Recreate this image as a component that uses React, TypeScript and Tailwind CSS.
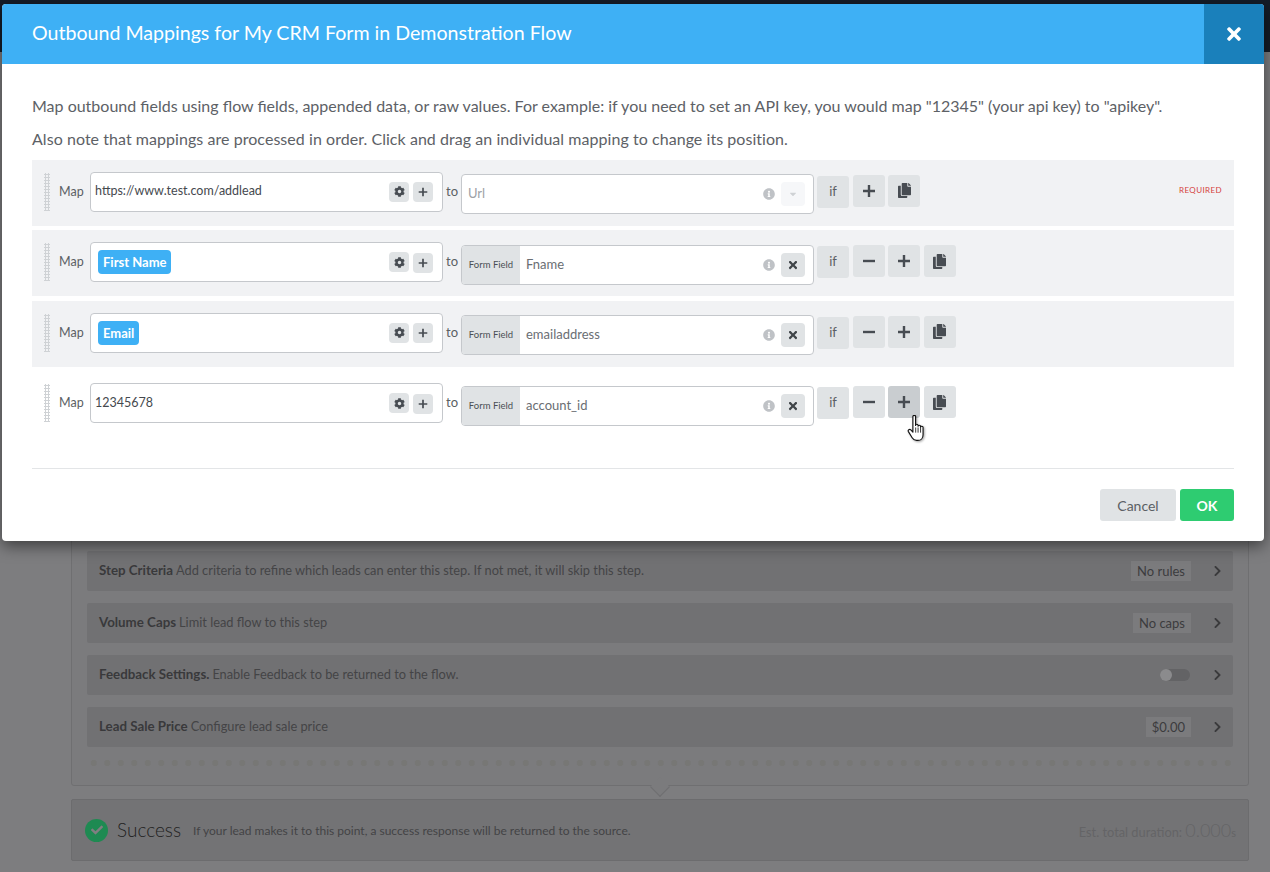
import { FaCog, FaCopy, FaInfoCircle, FaTimes, FaCheck, FaChevronRight, FaCaretDown } from 'react-icons/fa'

const font = { fontFamily: '"Lato", "Open Sans", sans-serif' }

function PlusIcon({ className = 'w-3.5 h-3.5' }: { className?: string }) {
  return (
    <svg viewBox="0 0 14 14" className={className}>
      <path d="M7 1v12M1 7h12" stroke="currentColor" strokeWidth="2.4" fill="none" />
    </svg>
  )
}

function MinusIcon() {
  return (
    <svg viewBox="0 0 14 14" className="w-3.5 h-3.5">
      <path d="M1 7h12" stroke="currentColor" strokeWidth="2.4" fill="none" />
    </svg>
  )
}

function HandCursor() {
  return (
    <svg
      viewBox="1 1 16 26"
      className="absolute left-[907px] top-[415px] w-[18px] h-[27px] drop-shadow-[1px_1px_1px_rgba(0,0,0,0.35)]"
    >
      <path
        d="M6 2.5c0-1.6 2.6-1.6 2.6 0v8.5c0-1.4 2.4-1.4 2.4 0v.8c0-1.3 2.4-1.3 2.4 0v.9c0-1.2 2.4-1.2 2.4.2v7c0 3.400-2.200 5.600-5 5.600H9.500c-2 0-3.200-1-4.200-2.600L1.700 17c-.9-1.600 1.100-2.900 2.300-1.600L6 17.500z"
        fill="#fff"
        stroke="#111"
        strokeWidth="1.1"
        strokeLinejoin="round"
      />
      <path d="M8.700 13v5M11 13v5M13.400 13v5" stroke="#111" strokeWidth=".8" fill="none" />
    </svg>
  )
}

function DragHandle() {
  return (
    <div className="w-[6px] h-[38px] mt-[1px] shrink-0 bg-[radial-gradient(circle,#cfd2d5_1px,transparent_1.1px)] bg-[length:3px_3px]" />
  )
}

function IconButton({ children, active }: { children: React.ReactNode; active?: boolean }) {
  return (
    <button
      className={`w-8 h-8 rounded-[3px] flex items-center justify-center text-[#474c52] ${active ? 'bg-[#c9cdd0]' : 'bg-[#e0e3e5]'}`}
    >
      {children}
    </button>
  )
}

type Mapping = {
  source: string
  pill?: boolean
  target: string
  required?: boolean
  hasRemove?: boolean
  bg?: boolean
  active?: boolean
}

const mappings: Mapping[] = [
  { source: 'https://www.test.com/addlead', target: 'Url', required: true, bg: true },
  { source: 'First Name', pill: true, target: 'Fname', hasRemove: true, bg: true },
  { source: 'Email', pill: true, target: 'emailaddress', hasRemove: true, bg: true },
  { source: '12345678', target: 'account_id', hasRemove: true, active: true },
]

function MappingRow({ m }: { m: Mapping }) {
  return (
    <div className={`h-[66px] mb-[4.5px] pl-3 pr-3 pt-3 flex items-start ${m.bg ? 'bg-[#f1f2f4]' : ''}`}>
      <DragHandle />
      <span className="ml-[9px] w-[31px] shrink-0 leading-[40px] text-[12.5px] text-[#5b5f64]">Map</span>
      {/* source */}
      <div className="w-[353px] h-10 shrink-0 bg-white border border-[#c5c8cc] rounded-[4px] flex items-center pl-1 pr-[9px]">
        {m.pill ? (
          <span className="ml-[3px] h-6 px-[5px] rounded-[4px] bg-[#3eb0f5] text-white text-[13px] font-bold leading-6">
            {m.source}
          </span>
        ) : (
          <span className="text-[12.5px] text-[#45494e]">{m.source}</span>
        )}
        <span className="ml-auto w-5 h-5 rounded-[4px] bg-[#e0e3e5] flex items-center justify-center text-[#474c52]">
          <FaCog className="w-[11px] h-[11px]" />
        </span>
        <span className="ml-1 w-5 h-5 mt-[1px] rounded-[4px] bg-[#e0e3e5] flex items-center justify-center text-[#474c52]">
          <PlusIcon className="w-[10px] h-[10px]" />
        </span>
      </div>
      <span className="w-[18px] ml-0 shrink-0 text-center leading-[38px] text-[13px] text-[#5b5f64]">to</span>
      {/* target */}
      <div className="w-[353px] h-10 mt-[2.5px] shrink-0 bg-white border border-[#c5c8cc] rounded-[4px] flex items-center overflow-hidden pr-2">
        {m.hasRemove ? (
          <>
            <span className="w-[58px] h-full bg-[#e0e3e5] text-[9.5px] text-[#4b4f54] flex items-center justify-center shrink-0">
              Form Field
            </span>
            <span className="ml-[6px] text-[13px] text-[#6a6e73]">{m.target}</span>
          </>
        ) : (
          <span className="ml-[6px] text-[13px] text-[#9da1a6]">{m.target}</span>
        )}
        <FaInfoCircle className="ml-auto w-3 h-3 text-[#bfc2c6]" />
        {m.hasRemove ? (
          <span className="ml-[6px] w-6 h-6 rounded-[4px] bg-[#e0e3e5] flex items-center justify-center text-[#3f4448]">
            <FaTimes className="w-3 h-3" />
          </span>
        ) : (
          <span className="ml-[6px] w-6 h-6 rounded-[4px] bg-[#f6f7f9] flex items-center justify-center text-[#cfd2d5]">
            <FaCaretDown className="w-[10px] h-[10px]" />
          </span>
        )}
      </div>
      {/* actions */}
      <div className="ml-[3px] mt-[3px] flex gap-[3.5px]">
        <div className="mt-[1px]">
          <IconButton>
            <span className="text-[13px] text-[#5b5f64]">if</span>
          </IconButton>
        </div>
        {m.hasRemove && (
          <IconButton>
            <MinusIcon />
          </IconButton>
        )}
        <IconButton active={m.active}>
          <PlusIcon />
        </IconButton>
        <IconButton>
          <FaCopy className="w-[13px] h-[15px]" />
        </IconButton>
      </div>
      {m.required && (
        <span className="ml-auto mt-[13px] text-[8px] leading-[10px] tracking-[0.4px] text-[#d43f3a]">REQUIRED</span>
      )}
    </div>
  )
}

function BackRow({ title, text, right }: { title: string; text: string; right: React.ReactNode }) {
  return (
    <div className="h-10 bg-[#717173] rounded-[2px] pl-3 pr-[10px] flex items-center text-[13px] text-[#3c3c3e]">
      <b className="font-bold text-[13.3px] text-[#39393b]">{title}</b>
      <span className="ml-[3px] text-[12.8px] text-[#444446]">{text}</span>
      <div className="ml-auto flex items-center">{right}</div>
      <FaChevronRight className="ml-[22px] mr-[1px] w-[9px] h-[12px] text-[#3a3a3c]" />
    </div>
  )
}

function Tag({ children }: { children: React.ReactNode }) {
  return <span className="h-5 px-[6px] bg-[#7b7b7d] leading-5 text-[#3c3c3e]">{children}</span>
}

export default function App() {
  return (
    <div className="relative w-[1270px] h-[872px] overflow-hidden bg-[#7d7d7f]" style={font}>
      {/* Page behind the dialog */}
      <div className="h-[52px] bg-[#141c28]" />
      <div className="ml-[71px] mr-[21px]">
        <div className="h-[734px] bg-[#7b7b7d] border border-[#6f6f71] rounded-[3px] px-[15px] flex flex-col justify-end">
          <div className="flex flex-col gap-3">
            <BackRow
              title="Step Criteria"
              text="Add criteria to refine which leads can enter this step. If not met, it will skip this step."
              right={<Tag>No rules</Tag>}
            />
            <BackRow title="Volume Caps" text="Limit lead flow to this step" right={<Tag>No caps</Tag>} />
            <BackRow
              title="Feedback Settings."
              text="Enable Feedback to be returned to the flow."
              right={
                <span className="w-[30px] h-3 mr-[1px] rounded-full bg-[#636365] relative">
                  <span className="absolute left-0 top-0 w-3 h-3 rounded-full bg-[#8b8b8d]" />
                </span>
              }
            />
            <BackRow title="Lead Sale Price" text="Configure lead sale price" right={<Tag>$0.00</Tag>} />
          </div>
          <div className="mt-[13px] mb-[19px] h-[6px] bg-[radial-gradient(circle,#777775_3px,transparent_3px)] bg-[length:13.5px_6px]" />
        </div>
        <div className="mt-[13px] h-[62px] bg-[#737375] border border-[#6c6c6e] rounded-[2px] pl-[13px] pr-[12px] flex items-center">
          <span className="w-[23px] h-[23px] rounded-full bg-[#1e8a52] flex items-center justify-center text-[#7f7f81]">
            <FaCheck className="w-3 h-3" />
          </span>
          <span className="ml-[9px] text-[19px] font-light text-[#1f1f21]">Success</span>
          <span className="ml-[12px] mt-[2px] text-[12px] text-[#434345]">
            If your lead makes it to this point, a success response will be returned to the source.
          </span>
          <span className="ml-auto text-[12.8px] text-[#646466]">
            Est. total duration: <span className="text-[18px] font-light">0.000</span>
            <span className="text-[11px]">s</span>
          </span>
        </div>
      </div>
      <div className="absolute left-[653px] top-[780px] w-[14px] h-[14px] rotate-45 bg-[#7b7b7d] border-r border-b border-[#6f6f71]" />

      {/* Dialog */}
      <div className="absolute left-[2px] top-[4px] w-[1262px] h-[537px] bg-white rounded-[4px] overflow-hidden shadow-[0_5px_15px_rgba(0,0,0,0.5)]">
        <div className="h-[60px] bg-[#3eb0f5] flex items-center justify-between pl-[30px]">
          <h1 className="text-[19.6px] -mt-[2px] text-white">Outbound Mappings for My CRM Form in Demonstration Flow</h1>
          <button className="w-[60px] h-full bg-[#1a80bb] flex items-center justify-center text-white">
            <FaTimes className="w-5 h-5" />
          </button>
        </div>
        <div className="px-[30px] pt-[32px]">
          <p className="text-[16px] leading-5 text-[#5d6166]">
            Map outbound fields using flow fields, appended data, or raw values. For example: if you need to set an API
            key, you would map "12345" (your api key) to "apikey".
          </p>
          <p className="mt-[13px] text-[16px] leading-5 tracking-[0.05px] text-[#5d6166]">
            Also note that mappings are processed in order. Click and drag an individual mapping to change its position.
          </p>
          <div className="mt-[10.7px]">
            {mappings.map((m) => (
              <MappingRow key={m.target} m={m} />
            ))}
          </div>
          <div className="mt-[31.3px] border-t border-[#e3e5e7]" />
          <div className="mt-5 flex justify-end gap-1">
            <button className="w-[76px] h-8 rounded-[3px] bg-[#e0e3e5] text-[14px] text-[#5b5f64]">Cancel</button>
            <button className="w-[54px] h-8 rounded-[3px] bg-[#2ecc71] text-[14px] font-bold text-white">OK</button>
          </div>
        </div>
      </div>
      <HandCursor />
    </div>
  )
}
